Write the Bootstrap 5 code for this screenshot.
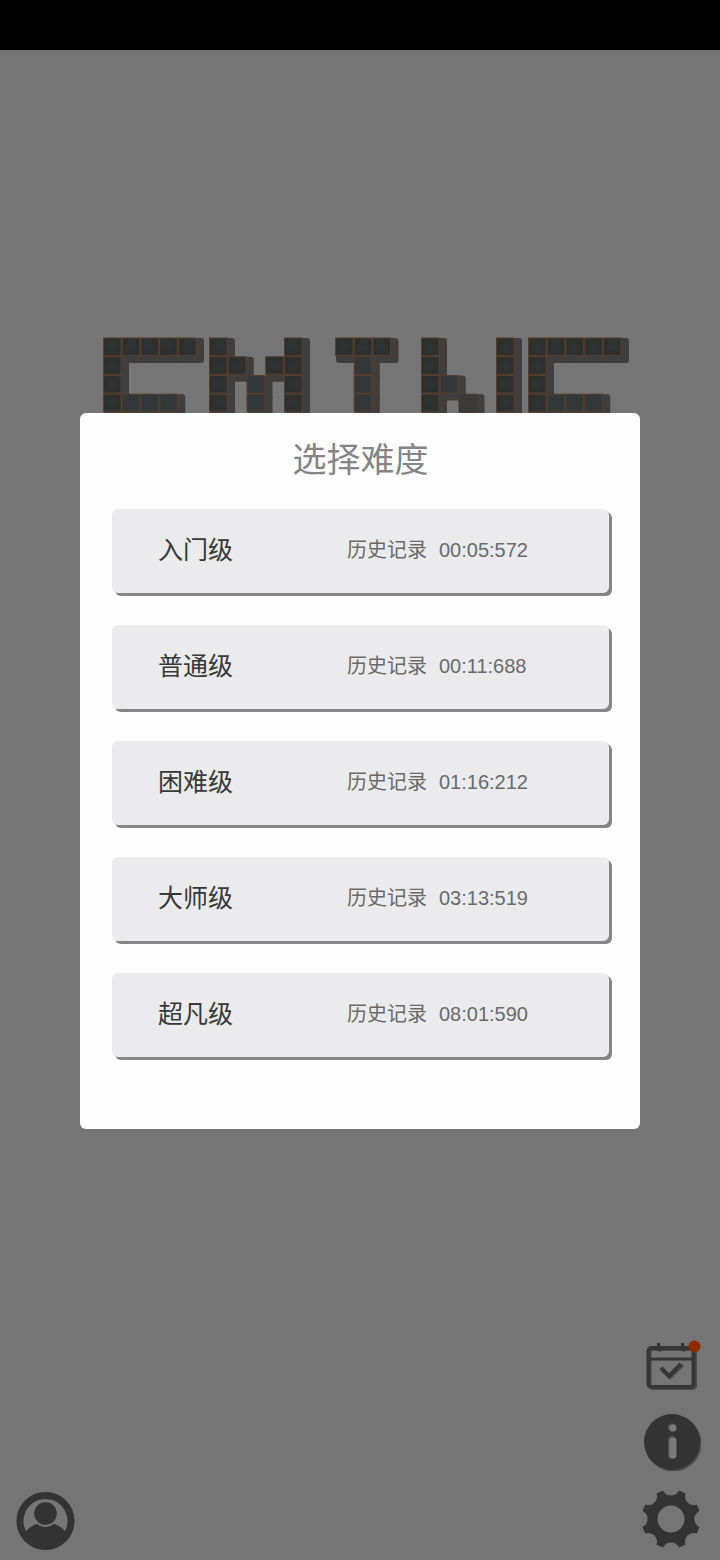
<!DOCTYPE html>
<html lang="zh-CN">
<head>
<meta charset="utf-8">
<meta name="viewport" content="width=device-width, initial-scale=1">
<title>选择难度</title>
<link rel="stylesheet" href="https://cdn.jsdelivr.net/npm/bootstrap@5.3.0/dist/css/bootstrap.min.css">
<style>
  body { font-family: "Liberation Sans", "Noto Sans CJK SC", sans-serif; background: #757575; }
  .status-strip { height: 50px; background: #000; }
  .stage { display: grid; }
  .scene, .dialog-layer { grid-area: 1 / 1; min-width: 0; }
  .scene { padding-top: 280px; }
  .dialog-layer { z-index: 1; padding: 363px 80px 0; pointer-events: none; }
  .level-dialog { background: #fefefe; border-radius: 6px; padding: 22px 31px 72px 32px; pointer-events: auto; }
  .level-title { font-size: 34px; line-height: 50px; color: #858585; margin-bottom: 24px; }
  .level-list { gap: 32px; }
  .level-btn { height: 84px; border: 0; border-radius: 6px; background: #ebebed; box-shadow: 3px 3px 0 #858585; padding: 0 46px 2px; }
  .level-name { width: 189px; font-size: 25px; line-height: 36px; color: #383838; }
  .level-record { gap: 12px; font-size: 20px; line-height: 30px; color: #6a6a6a; }
  .dock { padding: 0 19px 10px 15px; color: #333; }
  .dock-group { gap: 19px; }
  .dock-btn { border: 0; padding: 0; background: none; color: inherit; line-height: 0; }
</style>
</head>
<body class="d-flex flex-column min-vh-100">
<div class="status-strip flex-shrink-0"></div>
<main class="stage flex-grow-1">
  <div class="scene d-flex flex-column justify-content-between">
    <svg id="logo" class="w-100" viewBox="0 0 720 120" role="img" aria-label="GMINE">
      <defs>
        <radialGradient id="tileFill">
          <stop offset="0" stop-color="#2d3536"/><stop offset="1" stop-color="#2e2e2c"/>
        </radialGradient>
      </defs>
    </svg>
    <footer class="dock d-flex justify-content-between align-items-end">
      <button class="dock-btn" type="button" aria-label="账号">
        <svg width="60" height="60" viewBox="0 0 60 60">
          <circle cx="30.500" cy="31" r="25.500" fill="none" stroke="currentColor" stroke-width="7"/>
          <circle cx="30.500" cy="23.500" r="11.300" fill="currentColor"/>
          <path fill="currentColor" d="M7 46 Q13 36.500 22 34 Q30.500 40.500 39 34 Q48 36.500 54 46 Q46 59 30.500 59 Q15 59 7 46z"/>
        </svg>
      </button>
      <div class="dock-group d-flex flex-column">
        <button class="dock-btn" type="button" aria-label="每日签到">
          <svg width="60" height="60" viewBox="0 0 60 60">
            <g fill="none" stroke="#4b4b4b" stroke-width="3">
              <rect x="9" y="17.500" width="45.500" height="39" rx="3"/><path d="M22 39l7 7 13-13"/>
              <path d="M19 13v7M43 13v7" stroke-width="2"/>
            </g>
            <g fill="none" stroke="#363636" stroke-width="4">
              <rect x="7.500" y="16" width="45" height="39" rx="3"/><path d="M7 27h45" stroke-width="3"/>
              <path d="M17.500 11v8M41.500 11v8" stroke-width="3"/><path d="M20 36l8 8 12-12"/>
            </g>
            <circle cx="53.500" cy="14.500" r="6" fill="#8f2a05"/>
          </svg>
        </button>
        <button class="dock-btn" type="button" aria-label="关于">
          <svg width="60" height="60" viewBox="0 0 60 60">
            <circle cx="32.500" cy="32.500" r="28" fill="#4b4b4b"/>
            <circle cx="31" cy="31" r="28" fill="#333"/>
            <circle cx="31" cy="16.500" r="4" fill="#555"/><circle cx="32" cy="17" r="3.500" fill="#7c7c7c"/>
            <path d="M31 29v15" stroke="#555" stroke-width="8" stroke-linecap="round"/>
            <path d="M32 30v14" stroke="#7c7c7c" stroke-width="7" stroke-linecap="round"/>
          </svg>
        </button>
        <button class="dock-btn" type="button" aria-label="设置">
          <svg width="60" height="60" viewBox="0 0 60 60">
            <g transform="translate(30 29)">
              <path fill="currentColor" stroke="currentColor" stroke-width="2" stroke-linejoin="round" d="M27.300 8.300L25.200 13.400A9.500 9.500 0 0 0 13.400 25.200L8.300 27.300A9.500 9.500 0 0 0 -8.300 27.300L-13.400 25.200A9.500 9.500 0 0 0 -25.200 13.400L-27.300 8.300A9.500 9.500 0 0 0 -27.300 -8.300L-25.200 -13.400A9.500 9.500 0 0 0 -13.400 -25.200L-8.300 -27.300A9.500 9.500 0 0 0 8.300 -27.300L13.400 -25.200A9.500 9.500 0 0 0 25.200 -13.400L27.300 -8.300A9.500 9.500 0 0 0 27.300 8.300z"/>
              <circle r="13.500" fill="#757575"/>
            </g>
          </svg>
        </button>
      </div>
    </footer>
  </div>
  <div class="dialog-layer">
    <section class="level-dialog" role="dialog" aria-labelledby="levelTitle">
      <h1 id="levelTitle" class="level-title text-center fw-normal mt-0">选择难度</h1>
      <div class="level-list d-flex flex-column">
        <button class="level-btn d-flex align-items-center text-start" type="button"><span class="level-name">入门级</span><span class="level-record d-flex"><span>历史记录</span><span>00:05:572</span></span></button>
        <button class="level-btn d-flex align-items-center text-start" type="button"><span class="level-name">普通级</span><span class="level-record d-flex"><span>历史记录</span><span>00:11:688</span></span></button>
        <button class="level-btn d-flex align-items-center text-start" type="button"><span class="level-name">困难级</span><span class="level-record d-flex"><span>历史记录</span><span>01:16:212</span></span></button>
        <button class="level-btn d-flex align-items-center text-start" type="button"><span class="level-name">大师级</span><span class="level-record d-flex"><span>历史记录</span><span>03:13:519</span></span></button>
        <button class="level-btn d-flex align-items-center text-start" type="button"><span class="level-name">超凡级</span><span class="level-record d-flex"><span>历史记录</span><span>08:01:590</span></span></button>
      </div>
    </section>
  </div>
</main>
<script src="https://cdn.jsdelivr.net/npm/bootstrap@5.3.0/dist/js/bootstrap.bundle.min.js"></script>
<script>
  // Title letters built from square tiles, each with a soft extruded shadow.
  const letters = [
    { x: 103, rows: ['#####', '#    ', '#    ', '#+++ '] },
    { x: 209, rows: ['#   #', '## ##', '# + #', '# + #'] },
    { x: 335, rows: ['###', ' + ', ' + ', ' + '] },
    { x: 421, rows: ['#   #', '#   #', '#+  #', '# - #'] },
    { x: 528, rows: ['#####', '#    ', '#    ', '#+++ '] }
  ];
  const pitch = 18.75, logo = document.getElementById('logo');
  let shade = '', tiles = '';
  letters.forEach(l => l.rows.forEach((row, r) => [...row].forEach((c, i) => {
    if (c === ' ') return;
    const x = l.x + i * pitch, y = 8 + r * pitch;
    shade += `<rect x="${x + 1}" y="${y}" width="25" height="25" rx="3" fill="#403e3d"/>`;
    const fill = c === '#' ? 'url(#tileFill)' : c === '+' ? '#343738' : '#3a3a39';
    const line = c === '-' ? '#403b38' : '#563c2b';
    tiles += `<rect x="${x + .5}" y="${y}" width="17.500" height="17.500" fill="${fill}" stroke="${line}"/>`;
  })));
  logo.insertAdjacentHTML('beforeend', shade + tiles);
</script>
</body>
</html>
